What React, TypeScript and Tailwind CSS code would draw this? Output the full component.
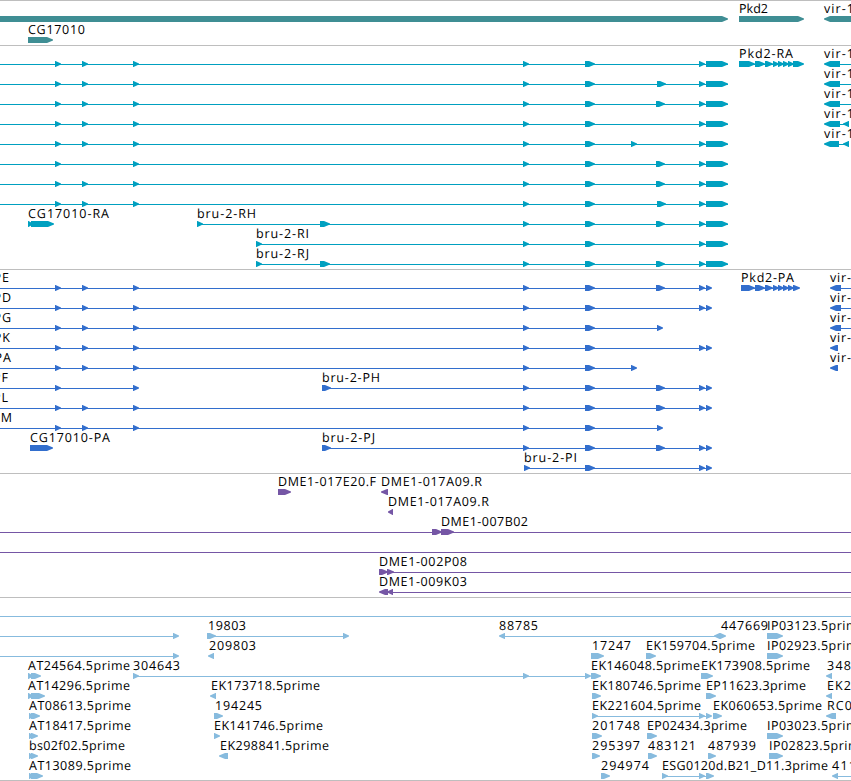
type Dir = 'r' | 'l';

// [start, end, direction]
type Exon = [number, number, Dir?];

// [x, text, width]
type Label = [number, string, number];

type Row = {
  labels?: Label[];
  lines?: [number, number][];
  exons?: Exon[];
};

type TrackData = {
  name: string;
  color: string;
  height: string;
  rowHeight: number;
  rows: Row[];
};

const viewWidth = 851;

const upstream: Exon[] = [[55, 61], [82, 88], [133, 139]];
const middle: Exon[] = [[523, 529], [585, 595]];
const utr: Exon[] = [[699, 705], [706, 728]];
const cds: Exon[] = [[699, 705], [706, 712]];
const optA: Exon = [656, 665];
const optB: Exon = [657, 666];

const genes: Row[] = [
  {
    labels: [[739, 'Pkd2', 29], [824, 'vir-1', 30]],
    exons: [[-20, 728], [739, 804], [824, 870, 'l']],
  },
  { labels: [[28, 'CG17010', 57]], exons: [[28, 53]] },
];

const transcripts: Row[] = [
  {
    labels: [[739, 'Pkd2-RA', 54], [824, 'vir-1', 30]],
    lines: [[0, 728], [739, 800], [830, 851]],
    exons: [
      ...upstream, ...middle, ...utr,
      [739, 755], [755, 765], [765, 773], [773, 779], [778, 784], [783, 789], [788, 794], [793, 804],
      [824, 840, 'l'],
    ],
  },
  {
    labels: [[824, 'vir-1', 30]],
    lines: [[0, 728], [830, 851]],
    exons: [...upstream, ...middle, optB, ...utr, [824, 840, 'l']],
  },
  {
    labels: [[824, 'vir-1', 30]],
    lines: [[0, 728], [830, 851]],
    exons: [...upstream, ...middle, optA, ...utr, [824, 840, 'l']],
  },
  {
    labels: [[824, 'vir-1', 30]],
    lines: [[0, 728], [830, 849]],
    exons: [...upstream, ...middle, ...utr, [824, 840, 'l'], [843, 849, 'l']],
  },
  {
    labels: [[824, 'vir-1', 30]],
    lines: [[0, 728], [830, 849]],
    exons: [...upstream, ...middle, [631, 637], ...utr, [824, 839, 'l'], [843, 849, 'l']],
  },
  { lines: [[0, 728]], exons: [[55, 61], [133, 139], ...middle, optA, ...utr] },
  { lines: [[0, 728]], exons: [...upstream, ...middle, optA, ...utr] },
  { lines: [[0, 728]], exons: [...upstream, ...middle, optB, ...utr] },
  {
    labels: [[28, 'CG17010-RA', 81], [197, 'bru-2-RH', 59]],
    lines: [[197, 728]],
    exons: [[28, 33], [31, 54], [197, 203], [320, 330], ...middle, optA, ...utr],
  },
  { labels: [[256, 'bru-2-RI', 53]], lines: [[256, 728]], exons: [[256, 262], ...middle, ...utr] },
  {
    labels: [[256, 'bru-2-RJ', 53]],
    lines: [[256, 728]],
    exons: [[256, 262], [320, 330], ...middle, optA, ...utr],
  },
];

const proteins: Row[] = [
  {
    labels: [[-48, 'bru-2-PE', 57], [741, 'Pkd2-PA', 53], [830, 'vir-', 21]],
    lines: [[0, 710], [741, 798], [835, 851]],
    exons: [
      ...upstream, ...middle, optA, ...cds,
      [741, 755], [755, 765], [765, 773], [773, 779], [778, 784], [783, 789], [788, 794], [793, 800],
      [830, 841, 'l'],
    ],
  },
  {
    labels: [[-48, 'bru-2-PD', 59], [830, 'vir-', 21]],
    lines: [[0, 710], [835, 851]],
    exons: [...upstream, ...middle, ...cds, [830, 841, 'l']],
  },
  {
    labels: [[-48, 'bru-2-PG', 59], [830, 'vir-', 21]],
    lines: [[0, 660], [835, 851]],
    exons: [...upstream, ...middle, [657, 663], [830, 841, 'l']],
  },
  {
    labels: [[-48, 'bru-2-PK', 58], [830, 'vir-', 21]],
    lines: [[0, 710]],
    exons: [...upstream, ...middle, ...cds, [830, 838, 'l']],
  },
  {
    labels: [[-48, 'bru-2-PA', 59], [830, 'vir-', 21]],
    lines: [[0, 635]],
    exons: [...upstream, ...middle, [631, 637], [830, 838, 'l']],
  },
  {
    labels: [[-48, 'bru-2-PF', 56], [322, 'bru-2-PH', 58]],
    lines: [[0, 137], [322, 710]],
    exons: [[55, 61], [133, 139], [322, 331], ...middle, optA, ...cds],
  },
  { labels: [[-48, 'bru-2-PL', 56]], lines: [[0, 710]], exons: [...upstream, ...middle, optA, ...cds] },
  { labels: [[-48, 'bru-2-PM', 60]], lines: [[0, 660]], exons: [...upstream, ...middle, [657, 663]] },
  {
    labels: [[30, 'CG17010-PA', 80], [322, 'bru-2-PJ', 53]],
    lines: [[322, 710]],
    exons: [[30, 53], [322, 331], ...middle, optA, ...cds],
  },
  {
    labels: [[524, 'bru-2-PI', 53]],
    lines: [[524, 710]],
    exons: [[524, 530], [585, 595], ...cds],
  },
];

const clones: Row[] = [
  {
    labels: [[278, 'DME1-017E20.F', 98], [381, 'DME1-017A09.R', 101]],
    exons: [[278, 291], [381, 388, 'l']],
  },
  { labels: [[388, 'DME1-017A09.R', 101]], exons: [[388, 393, 'l']] },
  { labels: [[441, 'DME1-007B02', 87]], lines: [[0, 851]], exons: [[432, 442], [441, 454]] },
  { lines: [[0, 851]] },
  { labels: [[379, 'DME1-002P08', 88]], lines: [[380, 851]], exons: [[379, 388], [387, 394]] },
  {
    labels: [[379, 'DME1-009K03', 88]],
    lines: [[380, 851]],
    exons: [[379, 388, 'l'], [387, 393, 'l']],
  },
];

const ests: Row[] = [
  { lines: [[0, 851]] },
  {
    labels: [[208, '19803', 38], [499, '88785', 39], [721, '447669', 47], [767, 'IP03123.5prime', 98]],
    lines: [[0, 176], [208, 346], [500, 723]],
    exons: [[173, 179], [207, 216], [343, 349], [499, 505, 'l'], [714, 720, 'l'], [720, 726], [767, 783]],
  },
  {
    labels: [[209, '209803', 47], [592, '17247', 39], [646, 'EK159704.5prime', 109], [767, 'IP02923.5prime', 98]],
    lines: [[0, 176]],
    exons: [[173, 179], [208, 214, 'l'], [591, 604], [646, 656], [767, 783]],
  },
  {
    labels: [
      [28, 'AT24564.5prime', 102], [133, '304643', 47], [591, 'EK146048.5prime', 109],
      [701, 'EK173908.5prime', 109], [827, '348', 24],
    ],
    lines: [[133, 589]],
    exons: [[28, 33], [31, 41], [133, 139], [523, 529], [585, 591], [591, 601], [701, 713], [826, 832, 'l']],
  },
  {
    labels: [
      [28, 'AT14296.5prime', 102], [211, 'EK173718.5prime', 109], [592, 'EK180746.5prime', 109],
      [706, 'EP11623.3prime', 100], [827, 'EK2', 24],
    ],
    exons: [[28, 33], [31, 45], [210, 216, 'l'], [592, 601], [706, 716], [826, 832, 'l']],
  },
  {
    labels: [
      [29, 'AT08613.5prime', 102], [215, '194245', 47], [592, 'EK221604.5prime', 109],
      [713, 'EK060653.5prime', 109], [827, 'RC0', 25],
    ],
    lines: [[592, 710]],
    exons: [[29, 34], [31, 40], [214, 223], [592, 598], [699, 705], [706, 712], [713, 722], [826, 836, 'l']],
  },
  {
    labels: [
      [29, 'AT18417.5prime', 102], [214, 'EK141746.5prime', 109], [592, '201748', 48],
      [647, 'EP02434.3prime', 100], [767, 'IP03023.5prime', 98],
    ],
    exons: [[29, 34], [31, 38], [214, 220], [592, 602], [647, 657], [767, 783]],
  },
  {
    labels: [
      [29, 'bs02f02.5prime', 96], [220, 'EK298841.5prime', 109], [592, '295397', 48],
      [648, '483121', 48], [708, '487939', 48], [769, 'IP02823.5prime', 98],
    ],
    exons: [[29, 34], [31, 38], [219, 228, 'l'], [592, 600], [648, 657], [708, 716], [769, 783]],
  },
  {
    labels: [[29, 'AT13089.5prime', 102], [601, '294974', 48], [662, 'ESG0120d.B21_D11.3prime', 166], [832, '411', 24]],
    lines: [[662, 708], [833, 851]],
    exons: [[29, 34], [31, 43], [601, 610], [662, 668], [699, 705], [706, 714], [832, 838, 'l']],
  },
];

const tracks: TrackData[] = [
  { name: 'Genes', color: '#3f8e94', height: 'h-[45px]', rowHeight: 21, rows: genes },
  { name: 'Transcripts', color: '#00a0c0', height: 'h-56', rowHeight: 20, rows: transcripts },
  { name: 'Proteins', color: '#326ecd', height: 'h-[204px]', rowHeight: 20, rows: proteins },
  { name: 'Clones', color: '#7556a5', height: 'h-31', rowHeight: 20, rows: clones },
  { name: 'ESTs', color: '#87bbde', height: 'h-46', rowHeight: 20, rows: ests },
];

function exonPoints([start, end, dir = 'r']: Exon, y: number) {
  const tip = Math.min(6, end - start - 0.5);
  const [tail, head, neck] = dir === 'l' ? [end, start, start + tip] : [start, end, end - tip];
  return `${tail},${y} ${neck},${y} ${head},${y + 2.5} ${head},${y + 3.5} ${neck},${y + 6} ${tail},${y + 6}`;
}

function Track({ track }: { track: TrackData }) {
  return (
    <section
      aria-label={track.name}
      className={`w-full shrink-0 overflow-hidden border-t border-[#bebebe] last:border-b ${track.height}`}
    >
      {/* the top border takes the first pixel, so the rows start one up */}
      <svg className="block h-full w-[851px]" viewBox={`0 1 ${viewWidth} 400`} preserveAspectRatio="xMinYMin slice">
        {track.rows.map((row, i) => {
          const y = i * track.rowHeight;
          return (
            <g key={i} fill={track.color}>
              {row.lines?.map(([from, to]) => (
                <rect key={from} x={from} y={y + 19} width={to - from} height={1} />
              ))}
              {row.exons?.map((exon) => (
                <polygon key={`${exon[0]}-${exon[1]}`} points={exonPoints(exon, y + 16)} />
              ))}
              {row.labels?.map(([x, text, width]) => (
                <text
                  key={x}
                  x={x}
                  y={y + 13}
                  textLength={width}
                  className="fill-black text-[12.5px] [text-rendering:geometricPrecision]"
                >
                  {text}
                </text>
              ))}
            </g>
          );
        })}
      </svg>
    </section>
  );
}

export default function App() {
  return (
    <main className="flex h-[781px] w-[851px] flex-col overflow-hidden bg-white font-['Open_Sans','DejaVu_Sans',sans-serif]">
      {tracks.map((track) => (
        <Track key={track.name} track={track} />
      ))}
    </main>
  );
}
